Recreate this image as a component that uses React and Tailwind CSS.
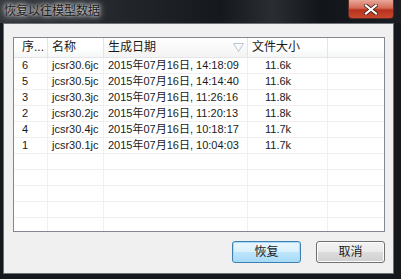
import React from "react";

const cols = [34, 56, 144, 80, 58];
const rows = [
  ["6", "jcsr30.6jc", "2015年07月16日, 14:18:09", "11.6k"],
  ["5", "jcsr30.5jc", "2015年07月16日, 14:14:40", "11.6k"],
  ["3", "jcsr30.3jc", "2015年07月16日, 11:26:16", "11.8k"],
  ["2", "jcsr30.2jc", "2015年07月16日, 11:20:13", "11.8k"],
  ["4", "jcsr30.4jc", "2015年07月16日, 10:18:17", "11.7k"],
  ["1", "jcsr30.1jc", "2015年07月16日, 10:04:03", "11.7k"],
];
const font = { fontFamily: '"Liberation Sans", "Noto Sans CJK SC", sans-serif' };

function Row({ cells }) {
  return (
    <div className="flex h-[16px] shrink-0 border-b border-[#f0f0f0] text-[11px] leading-[15px] text-[#1a1a1a]">
      {cols.map((w, i) => (
        <div
          key={i}
          style={{ width: w }}
          className={
            "shrink-0 whitespace-nowrap overflow-hidden border-r border-[#f0f0f0] " +
            (i === 0 ? "pl-[8px]" : i === 3 ? "pl-[17px]" : "pl-[4px]")
          }
        >
          {cells ? cells[i] || "" : ""}
        </div>
      ))}
    </div>
  );
}

export default function App() {
  const headers = ["序...", "名称", "生成日期", "文件大小", ""];
  return (
    <div style={font} className="w-[401px] h-[279px] overflow-hidden flex flex-col bg-[#15191e]">
      <div className="h-[23px] shrink-0 flex justify-between bg-[linear-gradient(90deg,#34383d_0%,#23272c_30%,#15191d_55%,#2a2e33_68%,#121519_80%,#1a1e22_100%)]">
        <div className="pl-[4px] pt-[3px] text-[12px] leading-[16px] text-[#1a1a1a] [text-shadow:0_0_3px_#e6e6e6,0_0_6px_#d0d0d0,0_0_9px_#b0b0b0]">
          恢复以往模型数据
        </div>
        <div className="mr-[7px] w-[46px] h-[19px] rounded-b-[4px] border border-t-0 border-[#5a2a24] bg-[linear-gradient(180deg,#e8a89a_0%,#d46a55_45%,#b8321d_55%,#c9472f_100%)] flex items-center justify-center">
          <svg width="14" height="11" viewBox="0 0 14 11">
            <path d="M2 1.5 L12 9.5 M12 1.5 L2 9.5" stroke="#3a1a14" strokeWidth="3.6" strokeLinecap="square" />
            <path d="M2 1.5 L12 9.5 M12 1.5 L2 9.5" stroke="#ffffff" strokeWidth="2.2" strokeLinecap="square" />
          </svg>
        </div>
      </div>
      <div className="ml-[3px] mr-[7px] h-[251px] shrink-0 bg-[#f0f0f0] border border-[#6d7278] flex flex-col pl-[9px] pr-[8px] pt-[13px]">
        <div className="h-[195px] w-[372px] shrink-0 border border-[#828790] bg-white flex flex-col overflow-hidden">
          <div className="flex h-[20px] shrink-0 border-b border-[#e5e5e5] text-[12px] leading-[19px] text-[#1a1a1a] bg-[linear-gradient(180deg,#ffffff_0%,#ffffff_50%,#f5f6f7_100%)]">
            {cols.map((w, i) => (
              <div
                key={i}
                style={{ width: w }}
                className={
                  "shrink-0 whitespace-nowrap border-r border-[#e5e5e5] relative " +
                  (i === 0 ? "pl-[8px]" : "pl-[4px]") +
                  (i === 2 ? " bg-[linear-gradient(180deg,#ffffff_0%,#f3f3f3_100%)]" : "")
                }
              >
                {headers[i]}
                {i === 2 && (
                  <svg className="absolute right-[3px] top-[5px]" width="11" height="9" viewBox="0 0 11 9">
                    <path d="M0.5 0.5 L10.5 0.5 L5.5 8.5 Z" fill="none" stroke="#b8c4cf" strokeWidth="1" />
                  </svg>
                )}
              </div>
            ))}
          </div>
          {rows.map((r, k) => (
            <Row key={k} cells={r} />
          ))}
          {Array.from({ length: 5 }).map((_, k) => (
            <Row key={"e" + k} />
          ))}
        </div>
        <div className="flex justify-end gap-[15px] mt-[9px] w-[372px]">
          <button className="w-[69px] h-[22px] rounded-[3px] border border-[#3c7fb1] shadow-[inset_0_0_0_1px_#a6dcf8] bg-[linear-gradient(180deg,#eaf6fd_0%,#d9f0fc_50%,#bee6fd_51%,#a7d9f5_100%)] text-[12px] leading-[18px] text-[#1a1a1a]">
            恢复
          </button>
          <button className="w-[69px] h-[22px] rounded-[3px] border border-[#707070] shadow-[inset_0_0_0_1px_#fcfcfc] bg-[linear-gradient(180deg,#f2f2f2_0%,#ebebeb_50%,#dddddd_51%,#cfcfcf_100%)] text-[12px] leading-[18px] text-[#1a1a1a]">
            取消
          </button>
        </div>
      </div>
    </div>
  );
}
